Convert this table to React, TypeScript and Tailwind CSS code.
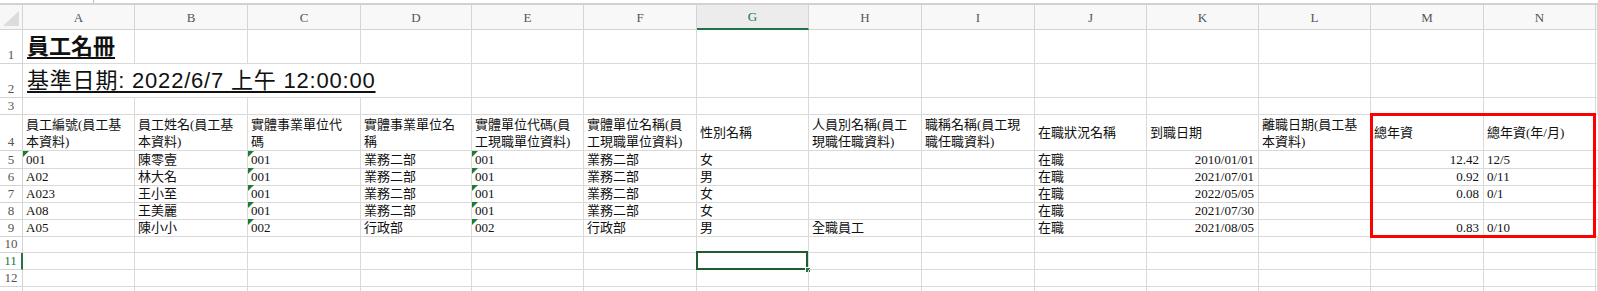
const GRID =
  "grid grid-cols-[23px_112px_113px_113px_111px_112px_113px_112px_113px_113px_112px_112px_112px_113px_112px_1fr]";

const LETTERS = ["A", "B", "C", "D", "E", "F", "G", "H", "I", "J", "K", "L", "M", "N", ""];

const HEADERS: string[][] = [
  ["員工編號(員工基", "本資料)"],
  ["員工姓名(員工基", "本資料)"],
  ["實體事業單位代", "碼"],
  ["實體事業單位名", "稱"],
  ["實體單位代碼(員", "工現職單位資料)"],
  ["實體單位名稱(員", "工現職單位資料)"],
  ["性別名稱"],
  ["人員別名稱(員工", "現職任職資料)"],
  ["職稱名稱(員工現", "職任職資料)"],
  ["在職狀況名稱"],
  ["到職日期"],
  ["離職日期(員工基", "本資料)"],
  ["總年資"],
  ["總年資(年/月)"],
  [],
];

const DATA: string[][] = [
  ["001", "陳零壹", "001", "業務二部", "001", "業務二部", "女", "", "", "在職", "2010/01/01", "", "12.42", "12/5", ""],
  ["A02", "林大名", "001", "業務二部", "001", "業務二部", "男", "", "", "在職", "2021/07/01", "", "0.92", "0/11", ""],
  ["A023", "王小至", "001", "業務二部", "001", "業務二部", "女", "", "", "在職", "2022/05/05", "", "0.08", "0/1", ""],
  ["A08", "王美麗", "001", "業務二部", "001", "業務二部", "女", "", "", "在職", "2021/07/30", "", "", "", ""],
  ["A05", "陳小小", "002", "行政部", "002", "行政部", "男", "全職員工", "", "在職", "2021/08/05", "", "0.83", "0/10", ""],
];

// text-number cells with the green error marker
const flagged = (r: number, c: number) => c === 2 || c === 4 || (c === 0 && r === 0);
const rightAligned = (c: number) => c === 10 || c === 12;

function RowNum({ n, active }: { n?: number; active?: boolean }) {
  return (
    <div
      className={
        active
          ? "flex items-end justify-center border-b border-r-2 border-b-[#d4d4d4] border-r-[#217346] text-[#217346]"
          : "flex items-end justify-center border-b border-r border-[#d4d4d4] text-[#555]"
      }
    >
      <span className="text-[13px] leading-[16px]">{n}</span>
    </div>
  );
}

function Triangle() {
  return (
    <span className="absolute left-0 top-0 h-0 w-0 border-r-[6px] border-t-[6px] border-r-transparent border-t-[#1e7b34]" />
  );
}

export default function App() {
  return (
    <div className="relative h-[291px] w-[1598px] overflow-hidden bg-white font-['Liberation_Serif','Noto_Sans_CJK_TC',serif] text-[13px] leading-[17px] text-[#111]">
      {/* formula bar edge */}
      <div className="relative h-[5px] border-b-2 border-[#d2d2d2] bg-white">
        <span className="absolute left-[93px] top-0 h-[3px] w-px bg-[#bbb]" />
      </div>

      {/* column letters */}
      <div className={`${GRID} h-[25px]`}>
        <div className="relative border-b border-r border-[#d4d4d4] bg-[#f7f7f7]">
          <span className="absolute bottom-[3px] right-[3px] h-0 w-0 border-b-[15px] border-l-[16px] border-b-[#dcdcdc] border-l-transparent" />
        </div>
        {LETTERS.map((l, i) =>
          i === 6 ? (
            <div
              key={i}
              className="flex items-center justify-center border-b-2 border-r border-b-[#217346] border-r-[#d4d4d4] bg-[#ececec] text-[#217346]"
            >
              {l}
            </div>
          ) : (
            <div
              key={i}
              className="flex items-center justify-center border-b border-r border-[#d4d4d4] bg-[#f8f8f8] text-[#555]"
            >
              {l}
            </div>
          )
        )}
      </div>

      {/* row 1 */}
      <div className={`${GRID} h-[34px]`}>
        <RowNum n={1} />
        <div className="flex items-center border-b border-r border-[#dadada] pl-[4px]">
          <span className="whitespace-nowrap font-['Liberation_Sans','Noto_Sans_CJK_TC',sans-serif] text-[22px] font-bold leading-[26px] underline underline-offset-[3px]">
            員工名冊
          </span>
        </div>
        {LETTERS.slice(1).map((_, i) => (
          <div key={i} className="border-b border-r border-[#dadada]" />
        ))}
      </div>

      {/* row 2 */}
      <div className={`${GRID} h-[34px]`}>
        <RowNum n={2} />
        <div className="col-span-4 flex items-center border-b border-r border-[#dadada] pl-[4px]">
          <span className="whitespace-nowrap font-['Liberation_Sans','Noto_Sans_CJK_TC',sans-serif] text-[22px] leading-[26px] tracking-[0.8px] underline underline-offset-[3px]">
            基準日期: 2022/6/7 上午 12:00:00
          </span>
        </div>
        {LETTERS.slice(4).map((_, i) => (
          <div key={i} className="border-b border-r border-[#dadada]" />
        ))}
      </div>

      {/* row 3 */}
      <div className={`${GRID} h-[17px]`}>
        <RowNum n={3} />
        {LETTERS.map((_, i) => (
          <div key={i} className="border-b border-r border-[#dadada]" />
        ))}
      </div>

      {/* row 4: headers */}
      <div className={`${GRID} h-[36px]`}>
        <RowNum n={4} />
        {HEADERS.map((lines, i) => (
          <div key={i} className="flex flex-col justify-center border-b border-r border-[#dadada] pl-[3px]">
            {lines.map((t) => (
              <span key={t} className="whitespace-nowrap">
                {t}
              </span>
            ))}
          </div>
        ))}
      </div>

      {/* data rows */}
      {DATA.map((row, r) => (
        <div key={r} className={`${GRID} h-[17px]`}>
          <RowNum n={r + 5} />
          {row.map((v, c) => (
            <div
              key={c}
              className={
                rightAligned(c)
                  ? "relative flex items-center justify-end whitespace-nowrap border-b border-r border-[#dadada] pr-[4px]"
                  : "relative flex items-center whitespace-nowrap border-b border-r border-[#dadada] pl-[3px]"
              }
            >
              {v && flagged(r, c) && <Triangle />}
              {v}
            </div>
          ))}
        </div>
      ))}

      {/* empty rows */}
      {[10, 11, 12, 13].map((n) => (
        <div key={n} className={`${GRID} h-[17px]`}>
          <RowNum n={n < 13 ? n : undefined} active={n === 11} />
          {LETTERS.map((_, i) => (
            <div key={i} className="relative border-b border-r border-[#dadada]">
              {n === 11 && i === 6 && (
                <>
                  <span className="absolute -left-px -top-[2px] bottom-[-1px] right-0 border-2 border-[#1f5c2e]" />
                  <span className="absolute -bottom-[4px] -right-[3px] h-[6px] w-[6px] border border-white bg-[#217346]" />
                </>
              )}
            </div>
          ))}
        </div>
      ))}

      {/* annotation box */}
      <div className="absolute left-[1370px] top-[113px] h-[125px] w-[226px] border-[3px] border-[#ff0000]" />
    </div>
  );
}
